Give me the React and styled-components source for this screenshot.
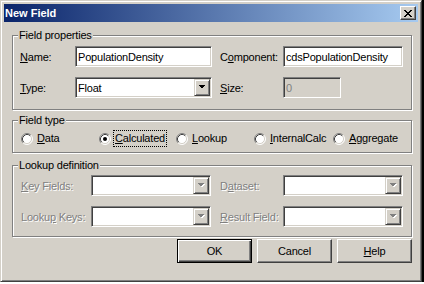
import React from "react";
import styled, { createGlobalStyle } from "styled-components";

const GlobalStyle = createGlobalStyle`
  html, body {
    margin: 0;
    padding: 0;
    background: #fff;
  }
  body {
    font-family: "Liberation Sans", Arial, sans-serif;
    font-size: 11px;
    color: #000;
  }
`;

const Window = styled.div`
  width: 422px;
  height: 282px;
  box-sizing: border-box;
  background: #d4d0c8;
  border: 1px solid;
  border-color: #d4d0c8 #404040 #404040 #d4d0c8;
  box-shadow: inset 1px 1px 0 #fff, inset -1px -1px 0 #808080, 2px 0 0 #000;
  padding: 3px;
  display: flex;
  flex-direction: column;
`;

const TitleBar = styled.div`
  height: 18px;
  flex-shrink: 0;
  display: flex;
  align-items: center;
  justify-content: space-between;
  padding: 0 2px 0 1px;
  background: linear-gradient(to right, #0a246a, #a6caf0);
  color: #fff;
  font-weight: bold;
`;

const CloseButton = styled.div`
  width: 16px;
  height: 14px;
  box-sizing: border-box;
  background: #d4d0c8;
  border: 1px solid;
  border-color: #fff #404040 #404040 #fff;
  box-shadow: inset -1px -1px 0 #808080;
  display: flex;
  align-items: center;
  justify-content: center;
`;

const Body = styled.div`
  flex: 1;
  padding: 13px 6px 0 8px;
  display: flex;
  flex-direction: column;
  letter-spacing: -0.2px;
`;

const Group = styled.div`
  position: relative;
  border: 1px solid #808080;
  box-shadow: inset 1px 1px 0 #fff, 1px 1px 0 #fff;
  padding: ${(p) => p.$pad};
  margin-top: ${(p) => p.$mt || 0}px;
`;

const Caption = styled.span`
  position: absolute;
  top: -7px;
  left: 5px;
  padding: 0 1px;
  line-height: 13px;
  background: #d4d0c8;
`;

const Row = styled.div`
  display: flex;
  align-items: center;
  height: 21px;
  & + & {
    margin-top: 10px;
  }
`;

const Label = styled.span`
  width: ${(p) => p.$w}px;
  margin-left: ${(p) => p.$ml || 0}px;
  flex-shrink: 0;
  color: ${(p) => (p.$disabled ? "#808080" : "#000")};
  text-shadow: ${(p) => (p.$disabled ? "1px 1px 0 #fff" : "none")};
`;

const Sunken = styled.div`
  width: ${(p) => p.$w}px;
  height: 21px;
  box-sizing: border-box;
  flex-shrink: 0;
  border: 1px solid;
  border-color: #808080 #fff #fff #808080;
  box-shadow: inset 1px 1px 0 #404040, inset -1px -1px 0 #d4d0c8;
  background: ${(p) => (p.$disabled ? "#d4d0c8" : "#fff")};
  color: ${(p) => (p.$disabled ? "#808080" : "#000")};
  display: flex;
  align-items: center;
  padding: 1px;
`;

const Value = styled.span`
  flex: 1;
  padding-left: 1px;
  white-space: nowrap;
  overflow: hidden;
`;

const DropButton = styled.div`
  width: 16px;
  height: 17px;
  box-sizing: border-box;
  flex-shrink: 0;
  background: #d4d0c8;
  border: 1px solid;
  border-color: #d4d0c8 #404040 #404040 #d4d0c8;
  box-shadow: inset 1px 1px 0 #fff, inset -1px -1px 0 #808080;
  display: flex;
  align-items: center;
  justify-content: center;
`;

const RadioRow = styled.div`
  display: grid;
  grid-template-columns: 78px 77px 78px 79px auto;
  align-items: center;
  height: 17px;
`;

const RadioItem = styled.div`
  display: flex;
  align-items: center;
  gap: 2px;
`;

const RadioText = styled.span`
  line-height: 15px;
  padding: 0 1px;
  border: 1px ${(p) => (p.$focus ? "dotted #000" : "solid transparent")};
`;

const ButtonRow = styled.div`
  display: flex;
  justify-content: flex-end;
  gap: 5px;
  margin-top: 2px;
`;

const Button = styled.div`
  width: 75px;
  height: 24px;
  box-sizing: border-box;
  display: flex;
  align-items: center;
  justify-content: center;
  background: #d4d0c8;
  border: 1px solid;
  border-color: ${(p) => (p.$default ? "#000" : "#fff #404040 #404040 #fff")};
  box-shadow: ${(p) =>
    p.$default
      ? "inset 1px 1px 0 #fff, inset -1px -1px 0 #404040, inset -2px -2px 0 #808080"
      : "inset -1px -1px 0 #808080"};
`;

const Arrow = ({ disabled }) => (
  <svg width="8" height="5" viewBox="0 0 8 5" shapeRendering="crispEdges">
    {disabled && <path d="M1 1h7L4.5 4.5z" fill="#fff" />}
    <path d="M0 0h7L3.5 3.5z" fill={disabled ? "#808080" : "#000"} />
  </svg>
);

const Combo = ({ w, value, disabled }) => (
  <Sunken $w={w}>
    <Value>{value}</Value>
    <DropButton>
      <Arrow disabled={disabled} />
    </DropButton>
  </Sunken>
);

const Radio = ({ checked }) => (
  <svg width="12" height="12" viewBox="0 0 12 12">
    <circle cx="6" cy="6" r="5" fill="#fff" />
    <path d="M2.11 9.89A5.5 5.5 0 0 1 9.89 2.11" fill="none" stroke="#808080" />
    <path d="M9.89 2.11A5.5 5.5 0 0 1 2.11 9.89" fill="none" stroke="#fff" />
    <path d="M2.82 9.18A4.5 4.5 0 0 1 9.18 2.82" fill="none" stroke="#404040" />
    <path d="M9.18 2.82A4.5 4.5 0 0 1 2.82 9.18" fill="none" stroke="#d4d0c8" />
    {checked && <circle cx="6" cy="6" r="2" fill="#000" />}
  </svg>
);

const radios = [
  { key: "D", post: "ata" },
  { key: "C", post: "alculated", checked: true },
  { key: "L", post: "ookup" },
  { key: "I", post: "nternalCalc" },
  { key: "A", post: "ggregate" },
];

export default function App() {
  return (
    <>
      <GlobalStyle />
      <Window>
        <TitleBar>
          <span>New Field</span>
          <CloseButton>
            <svg width="8" height="7" viewBox="0 0 8 7" shapeRendering="crispEdges">
              <path
                d="M0 0h2v1H0zM6 0h2v1H6zM1 1h2v1H1zM5 1h2v1H5zM2 2h4v1H2zM3 3h2v1H3zM2 4h4v1H2zM1 5h2v1H1zM5 5h2v1H5zM0 6h2v1H0zM6 6h2v1H6z"
                fill="#000"
              />
            </svg>
          </CloseButton>
        </TitleBar>
        <Body>
          <Group $pad="10px 0 11px 7px">
            <Caption>Field properties</Caption>
            <Row>
              <Label $w={55}><u>N</u>ame:</Label>
              <Sunken $w={137}><Value>PopulationDensity</Value></Sunken>
              <Label $w={63} $ml={8}>C<u>o</u>mponent:</Label>
              <Sunken $w={120}><Value>cdsPopulationDensity</Value></Sunken>
            </Row>
            <Row>
              <Label $w={55}><u>T</u>ype:</Label>
              <Combo w={137} value="Float" />
              <Label $w={63} $ml={8}><u>S</u>ize:</Label>
              <Sunken $w={58} $disabled><Value>0</Value></Sunken>
            </Row>
          </Group>

          <Group $pad="9px 0 5px 8px" $mt={10}>
            <Caption>Field type</Caption>
            <RadioRow>
              {radios.map((r, i) => (
                <RadioItem key={i}>
                  <Radio checked={r.checked} />
                  <RadioText $focus={r.checked}>
                    <u>{r.key}</u>{r.post}
                  </RadioText>
                </RadioItem>
              ))}
            </RadioRow>
          </Group>

          <Group $pad="9px 0 9px 8px" $mt={12}>
            <Caption>Lookup definition</Caption>
            <Row>
              <Label $w={70} $disabled><u>K</u>ey Fields:</Label>
              <Combo w={120} disabled />
              <Label $w={63} $ml={9} $disabled>D<u>a</u>taset:</Label>
              <Combo w={120} disabled />
            </Row>
            <Row>
              <Label $w={70} $disabled>Looku<u>p</u> Keys:</Label>
              <Combo w={120} disabled />
              <Label $w={63} $ml={9} $disabled><u>R</u>esult Field:</Label>
              <Combo w={120} disabled />
            </Row>
          </Group>

          <ButtonRow>
            <Button $default>OK</Button>
            <Button>Cancel</Button>
            <Button><span><u>H</u>elp</span></Button>
          </ButtonRow>
        </Body>
      </Window>
    </>
  );
}
